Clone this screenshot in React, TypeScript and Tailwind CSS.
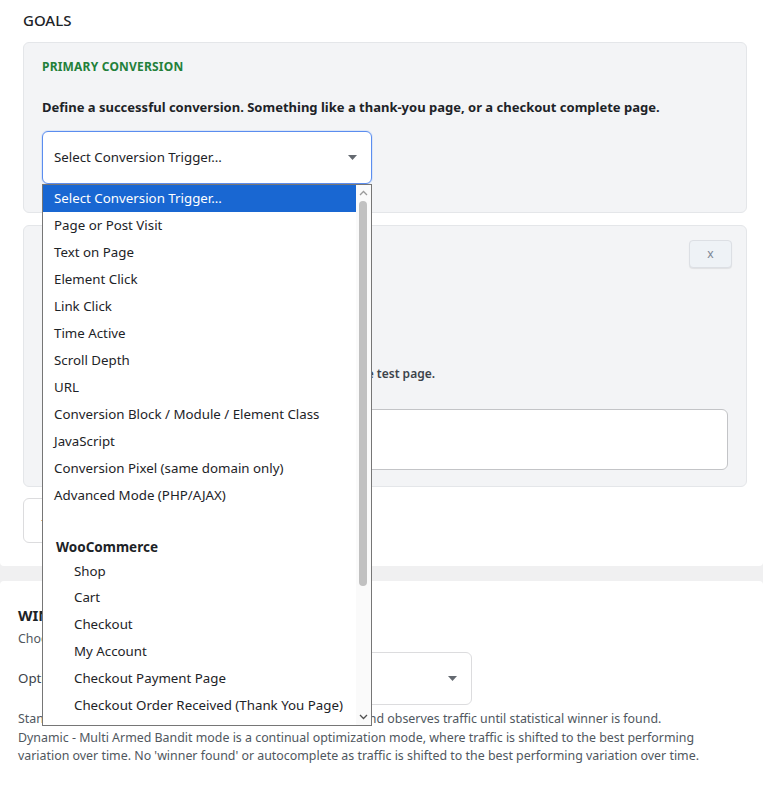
import React from "react";

const options = [
  "Page or Post Visit",
  "Text on Page",
  "Element Click",
  "Link Click",
  "Time Active",
  "Scroll Depth",
  "URL",
  "Conversion Block / Module / Element Class",
  "JavaScript",
  "Conversion Pixel (same domain only)",
  "Advanced Mode (PHP/AJAX)",
];

const woo = [
  "Shop",
  "Cart",
  "Checkout",
  "My Account",
  "Checkout Payment Page",
  "Checkout Order Received (Thank You Page)",
  "Add to Cart",
  "Product Page",
];

function Caret() {
  return (
    <svg width="9" height="5" viewBox="0 0 9 5" className="shrink-0">
      <path d="M0 0 L9 0 L4.5 5 Z" fill="#646970" />
    </svg>
  );
}

function Dropdown() {
  return (
    <div className="absolute left-[42px] top-[184px] w-[330px] h-[542px] border border-[#767676] bg-white overflow-hidden">
      <div className="pr-[15px] text-[13.3px] text-[#1d2327]">
        <div className="h-[27px] leading-[27px] pl-[11px] bg-[#1967d2] text-white">
          Select Conversion Trigger...
        </div>
        {options.map((o) => (
          <div key={o} className="h-[27px] leading-[27px] pl-[11px] whitespace-nowrap">
            {o}
          </div>
        ))}
        <div className="h-[27px]" />
        <div className="h-[23px] leading-[23px] pl-[13px] font-bold text-[13.5px]">WooCommerce</div>
        {woo.map((o, i) => (
          <div
            key={o}
            className={
              i === 0
                ? "h-[25px] leading-[25px] pl-[31px] whitespace-nowrap"
                : "h-[27px] leading-[27px] pl-[31px] whitespace-nowrap"
            }
          >
            {o}
          </div>
        ))}
      </div>
      <div className="absolute right-0 top-0 bottom-0 w-[15px] bg-[#fafafa]">
        <svg width="9" height="6" viewBox="0 0 9 6" className="absolute left-[3px] top-[5px]">
          <path d="M1 5 L4.5 1.5 L8 5" fill="none" stroke="#9a9a9a" strokeWidth="1.3" />
        </svg>
        <div className="absolute left-[3px] top-[16px] w-[8px] h-[385px] rounded-full bg-[#c1c1c1]" />
        <svg width="9" height="6" viewBox="0 0 9 6" className="absolute left-[3px] bottom-[5px]">
          <path d="M1 1 L4.5 4.5 L8 1" fill="none" stroke="#505050" strokeWidth="1.3" />
        </svg>
      </div>
    </div>
  );
}

export default function App() {
  return (
    <div
      className="relative w-[763px] h-[788px] overflow-hidden bg-[#f0f0f1] text-[#1d2327]"
      style={{ fontFamily: '"Noto Sans", "Open Sans", sans-serif' }}
    >
      <section className="bg-white rounded-b-[4px] pl-[23px] pr-[16px] pt-[10px] pb-[23px] h-[566px] flex flex-col">
        <h2 className="text-[15px] leading-[20px] font-medium text-[#1d2327]">GOALS</h2>

        <div className="mt-[12px] rounded-[6px] border border-[#e4e6e9] bg-[#f3f4f6] px-[18px] pt-[16px] pb-[28px]">
          <div className="text-[12px] leading-[16px] font-bold text-[#23803a] tracking-[0.2px]">
            PRIMARY CONVERSION
          </div>
          <p className="mt-[23px] text-[13px] leading-[18px] font-bold text-[#1d2327]">
            Define a successful conversion. Something like a thank-you page, or a checkout complete page.
          </p>
          <div className="mt-[15px] w-[330px] h-[53px] rounded-[6px] border border-[#5b8def] bg-white shadow-[0_0_0_1px_rgba(59,130,246,0.12)] flex items-center justify-between pl-[11px] pr-[14px] text-[13.3px]">
            <span>Select Conversion Trigger...</span>
            <Caret />
          </div>
        </div>

        <div className="mt-[12px] h-[262px] rounded-[6px] border border-[#e4e6e9] bg-[#f3f4f6] pl-[18px] pr-[14px] pt-[14px] pb-[16px] flex flex-col">
          <div className="flex items-start justify-between">
            <div className="text-[12px] leading-[16px] font-bold text-[#23803a] mt-[6px]">
              SECONDARY CONVERSION
            </div>
            <button className="w-[43px] h-[28px] rounded-[4px] border border-[#dcdfe4] bg-[#eef2f6] shadow-[0_1px_1px_rgba(0,0,0,0.08)] text-[12px] text-[#7b8593] leading-none">
              x
            </button>
          </div>
          <div className="flex-1" />
          <p className="w-[393px] text-right whitespace-nowrap text-[12px] leading-[16px] font-semibold text-[#3c434a]">
            Track an extra goal on the test page.
          </p>
          <div className="mt-[27px] mr-[4px] h-[61px] rounded-[6px] border border-[#c3c4c7] bg-white" />
        </div>

        <button className="mt-[11px] self-start w-[260px] h-[45px] rounded-[6px] border border-[#dcdcde] bg-white text-left pl-[17px] text-[13.3px] text-[#3c434a] whitespace-nowrap">
          + Add Secondary Conversion
        </button>
      </section>

      <section className="mt-[15px] bg-white rounded-t-[4px] px-[18px] pt-[24px] h-[207px]">
        <h2 className="text-[15px] leading-[20px] font-bold text-[#1d2327]">WINNER SETTINGS</h2>
        <p className="mt-[5px] text-[12.4px] leading-[18px] text-[#50575e]">
          Choose how the winner is chosen.
        </p>
        <div className="mt-[4px] flex items-center">
          <label className="w-[143px] text-[13.3px] text-[#3c434a]">Optimization Mode</label>
          <div className="w-[311px] h-[53px] rounded-[6px] border border-[#dcdcde] bg-white flex items-center justify-between pl-[11px] pr-[14px] text-[13.3px]">
            <span>Standard</span>
            <Caret />
          </div>
        </div>
        <p className="mt-[5px] text-[12.4px] leading-[18.5px] text-[#50575e] whitespace-nowrap">
          Standard - Classic split test mode which evenly splits traffic and observes traffic until statistical winner is found.
          <br />
          Dynamic - Multi Armed Bandit mode is a continual optimization mode, where traffic is shifted to the best performing
          <br />
          variation over time. No 'winner found' or autocomplete as traffic is shifted to the best performing variation over time.
        </p>
      </section>

      <Dropdown />
    </div>
  );
}
